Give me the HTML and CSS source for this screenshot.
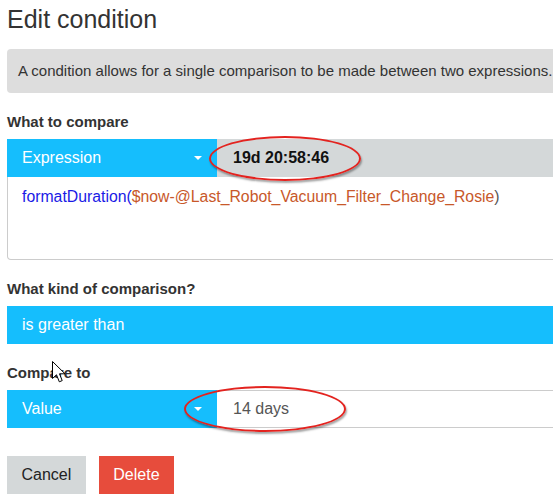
FILE: index.html
```html
<!DOCTYPE html>
<html lang="en">
<head>
    <meta charset="UTF-8">
    <meta name="viewport" content="width=device-width, initial-scale=1.0">
    <title>Edit condition</title>
    <link rel="stylesheet" href="styles.css">
</head>
<body>
    <div class="page">
        <h1>Edit condition</h1>
        <div class="info">A condition allows for a single comparison to be made between two expressions.</div>

        <div class="label">What to compare</div>
        <div class="row">
            <div class="select">Expression<span class="caret"></span></div>
            <div class="result">19d 20:58:46</div>
        </div>
        <div class="expr">
            <span class="fn">formatDuration(</span><span class="var">$now-@Last_Robot_Vacuum_Filter_Change_Rosie</span><span class="paren">)</span>
        </div>

        <div class="label">What kind of comparison?</div>
        <div class="bar">is greater than</div>

        <div class="label">Compare to</div>
        <div class="row">
            <div class="select">Value<span class="caret"></span></div>
            <div class="value">14 days</div>
        </div>

        <div class="buttons">
            <button class="btn btn-cancel">Cancel</button>
            <button class="btn btn-delete">Delete</button>
        </div>
    </div>

    <!-- annotations drawn over the screenshot -->
    <div class="circle circle-result"></div>
    <div class="circle circle-value"></div>
    <svg class="cursor" width="14" height="23" viewBox="0 0 14 23">
        <path d="M0.5 0.5 L0.5 17.5 L4.5 13.8 L7.3 20.8 L10.2 19.6 L7.5 12.8 L13 12.8 Z" fill="#fff" stroke="#000" stroke-width="1" stroke-linejoin="miter"/>
    </svg>
</body>
</html>
```

FILE: styles.css
```css
html, body {
    overflow: hidden;
}

body {
    margin: 0;
    padding: 0 0 0 7px;
    font-family: "Liberation Sans", Arial, sans-serif;
    color: #333;
    background-color: #fff;
}

.page {
    width: 640px;
}

h1 {
    margin: 5px 0 16px 0;
    font-size: 25px;
    line-height: 28px;
    font-weight: normal;
    color: #333;
}

.info {
    background-color: #dddddd;
    border-radius: 4px;
    padding: 12px 11px;
    font-size: 15px;
    line-height: 20px;
    color: #333;
}

.label {
    margin: 19px 0 7px 0;
    font-size: 15px;
    line-height: 20px;
    font-weight: bold;
    color: #333;
}

.row {
    display: flex;
    height: 38px;
}

.select {
    width: 210px;
    box-sizing: border-box;
    padding: 0 15px;
    background-color: #15befd;
    color: #fff;
    font-size: 16px;
    line-height: 38px;
    display: flex;
    justify-content: space-between;
    align-items: center;
}

.caret {
    width: 0;
    height: 0;
    border-left: 4px solid transparent;
    border-right: 4px solid transparent;
    border-top: 4px solid #fff;
}

.result {
    flex: 1;
    padding: 0 16px;
    background-color: #d4d8d9;
    color: #111;
    font-size: 16px;
    font-weight: bold;
    line-height: 38px;
}

.value {
    flex: 1;
    padding: 0 16px;
    border: 1px solid #ccc;
    border-left: none;
    color: #555;
    font-size: 16px;
    line-height: 36px;
}

.expr {
    height: 83px;
    box-sizing: border-box;
    border: 1px solid #ccc;
    border-top: none;
    border-radius: 0 0 4px 4px;
    padding: 10px 14px;
    font-size: 15.8px;
    line-height: 20px;
}

.fn {
    color: #1a1ae6;
}

.var {
    color: #c8582a;
}

.paren {
    color: #555;
}

.bar {
    height: 38px;
    padding: 0 15px;
    background-color: #15befd;
    color: #fff;
    font-size: 16px;
    line-height: 38px;
}

.buttons {
    display: flex;
    gap: 13px;
    margin-top: 28px;
}

.btn {
    height: 38px;
    padding: 0 14.5px;
    border: none;
    border-radius: 0;
    font-family: "Liberation Sans", Arial, sans-serif;
    font-size: 16px;
    cursor: pointer;
}

.btn-cancel {
    background-color: #d4d8d9;
    color: #222;
}

.btn-delete {
    background-color: #e74c3c;
    color: #fff;
}

.circle {
    position: absolute;
    border: 2px solid #e3231f;
    border-radius: 50%;
    box-shadow: 1px 2px 2px rgba(0, 0, 0, 0.35);
    box-sizing: border-box;
}

.circle-result {
    left: 209px;
    top: 136px;
    width: 152px;
    height: 45px;
}

.circle-value {
    left: 184px;
    top: 386px;
    width: 162px;
    height: 46px;
}

.cursor {
    position: absolute;
    left: 52px;
    top: 361px;
}
```
